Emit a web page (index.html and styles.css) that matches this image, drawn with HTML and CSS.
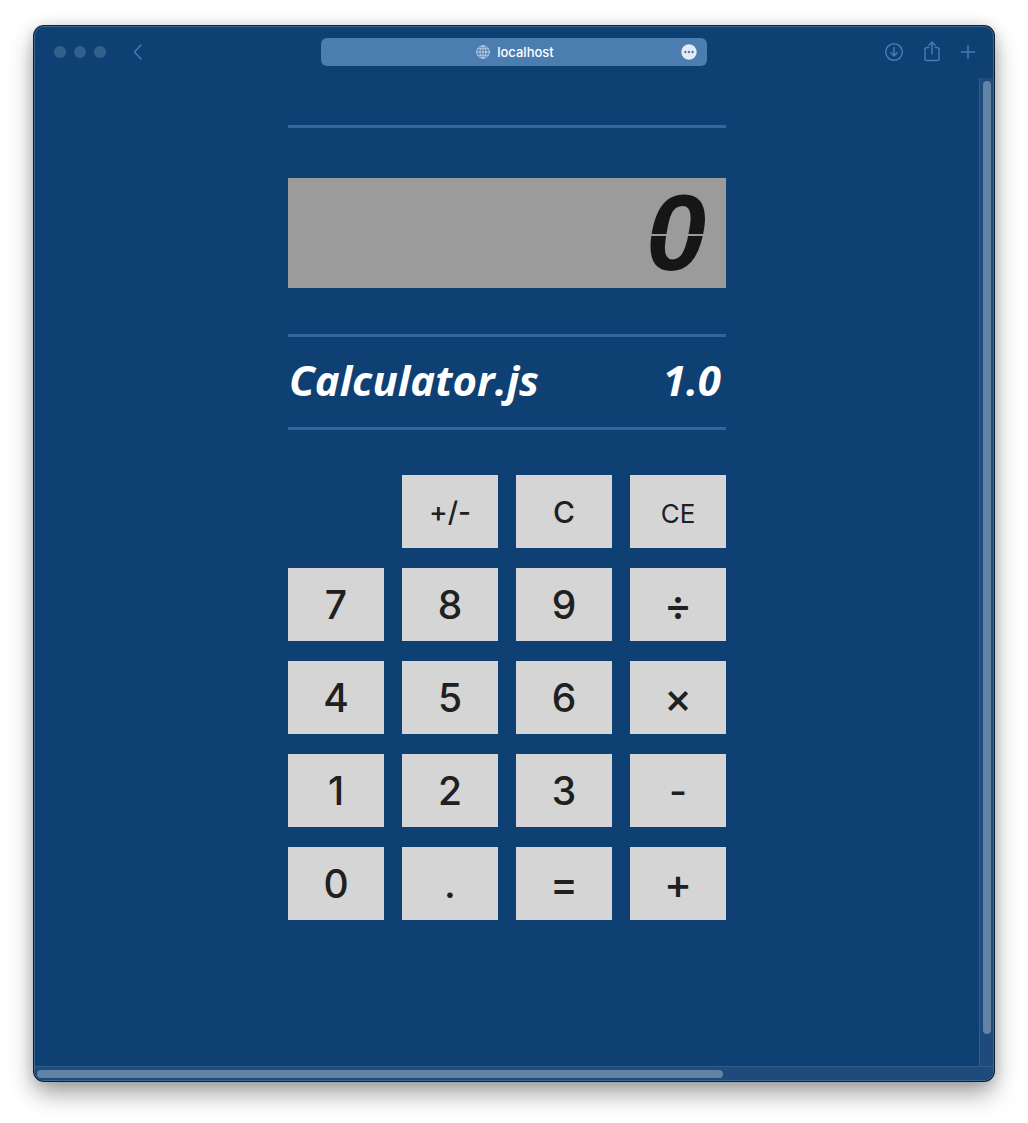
FILE: index.html
```html
<!DOCTYPE html>
<html lang="en">
<head>
<meta charset="utf-8">
<meta name="viewport" content="width=device-width, initial-scale=1">
<title>Calculator.js</title>
<link rel="stylesheet" href="styles.css">
</head>
<body>
<div class="window">
  <header class="toolbar">
    <div class="toolbar-side lights">
      <span class="light"></span><span class="light"></span><span class="light"></span>
      <button class="icon-button back" type="button" aria-label="Back">
        <svg width="10" height="18" viewBox="0 0 10 18"><path d="M8 2 1.5 9 8 16"/></svg>
      </button>
    </div>
    <div class="address">
      <svg class="globe" width="14" height="14" viewBox="0 0 14 14"><circle cx="7" cy="7" r="6.3"/><ellipse cx="7" cy="7" rx="3" ry="6.3"/><path d="M7 .7v12.6M.7 7h12.6M1.7 3.8h10.6M1.7 10.2h10.6"/></svg>
      <span class="host">localhost</span>
      <button class="icon-button more" type="button" aria-label="Page menu">
        <svg width="16" height="16" viewBox="0 0 16 16"><circle class="disc" cx="8" cy="8" r="7.7"/><circle class="dot" cx="4.4" cy="8" r="1.2"/><circle class="dot" cx="8" cy="8" r="1.2"/><circle class="dot" cx="11.6" cy="8" r="1.2"/></svg>
      </button>
    </div>
    <div class="toolbar-side actions">
      <button class="icon-button" type="button" aria-label="Downloads">
        <svg width="20" height="24" viewBox="0 0 20 24"><circle cx="10" cy="12" r="8.3"/><path d="M10 7.5v8.2M6.8 12.7l3.2 3.2 3.2-3.2"/></svg>
      </button>
      <button class="icon-button" type="button" aria-label="Share">
        <svg width="18" height="24" viewBox="0 0 18 24"><path d="M5.7 7.5H4Q2 7.500 2 9.500V18.500Q2 20.500 4 20.500H14Q16 20.500 16 18.500V9.500Q16 7.500 14 7.500H12.300M9 14V2.300M5.900 5.200 9 2.100 12.100 5.200"/></svg>
      </button>
      <button class="icon-button" type="button" aria-label="New tab">
        <svg width="16" height="24" viewBox="0 0 16 24"><path d="M8 5.500v13M1.500 12h13"/></svg>
      </button>
    </div>
  </header>
  <main class="page">
    <div class="calculator">
      <hr class="rule">
      <output class="display" aria-label="Result"><span class="digit">0</span></output>
      <hr class="rule">
      <h1 class="brand"><span>Calculator.js</span><span>1.0</span></h1>
      <hr class="rule">
      <div class="keys">
        <button class="key word first" type="button">+/-</button>
        <button class="key word" type="button">C</button>
        <button class="key word small" type="button">CE</button>
        <button class="key" type="button">7</button>
        <button class="key" type="button">8</button>
        <button class="key" type="button">9</button>
        <button class="key operator" type="button">÷</button>
        <button class="key" type="button">4</button>
        <button class="key" type="button">5</button>
        <button class="key" type="button">6</button>
        <button class="key operator" type="button">×</button>
        <button class="key" type="button">1</button>
        <button class="key" type="button">2</button>
        <button class="key" type="button">3</button>
        <button class="key" type="button">-</button>
        <button class="key" type="button">0</button>
        <button class="key" type="button">.</button>
        <button class="key operator" type="button">=</button>
        <button class="key operator" type="button">+</button>
      </div>
    </div>
  </main>
  <div class="track vertical"><div class="thumb"></div></div>
  <div class="track horizontal"><div class="thumb"></div></div>
</div>
</body>
</html>
```
FILE: styles.css
```css
* { box-sizing: border-box; }

body {
  margin: 0;
  min-height: 100vh;
  padding: 26px 34px 42px;
  background: #fff;
  font-family: Inter, "Liberation Sans", sans-serif;
}

.window {
  display: grid;
  grid-template: 51px 1fr 14px / 1fr 14px;
  min-height: calc(100vh - 68px);
  border: 1px solid #3c6894;
  border-radius: 10px;
  overflow: hidden;
  background: #0f4073;
  box-shadow: 0 0 0 1px #10202f, 0 12px 24px rgba(0, 0, 0, .38), 0 0 14px rgba(0, 0, 0, .14);
}

.toolbar {
  grid-column: 1 / -1;
  display: grid;
  grid-template-columns: 1fr minmax(120px, 386px) 1fr;
  align-items: center;
  padding: 0 17px 2px;
}

.toolbar-side { display: flex; align-items: center; gap: 8px; }
.lights { padding-left: 2px; }
.actions { justify-content: flex-end; gap: 19px; }

.light { width: 12px; height: 12px; border-radius: 50%; background: #335f8d; }

.icon-button {
  display: flex;
  padding: 0;
  border: 0;
  background: none;
}
.icon-button svg,
.globe {
  fill: none;
  stroke: #477bb1;
  stroke-width: 1.5;
  stroke-linecap: round;
  stroke-linejoin: round;
}
.back { margin-left: 19px; }

.address {
  display: grid;
  grid-template-columns: 1fr auto auto 1fr;
  align-items: center;
  gap: 7px;
  height: 28px;
  padding: 0 10px 0 12px;
  border-radius: 6px;
  background: #4b7db1;
}
.address .globe { grid-column: 2; stroke: #c9d8e8; stroke-width: .8; }
.host { color: #fff; font-size: 13px; line-height: 16px; font-weight: 500; }
.more { justify-self: end; }
.more .disc { fill: #e4ebf3; stroke: none; }
.more .dot { fill: #4b7db1; stroke: none; }

.page {
  display: flex;
  justify-content: center;
  padding: 47px 16px;
}

.calculator { width: 100%; max-width: 438px; }

.rule { height: 3px; margin: 0; border: 0; background: #35659c; }

.display {
  display: flex;
  align-items: center;
  justify-content: flex-end;
  height: 110px;
  margin: 50px 0 46px;
  padding: 0 20px;
  background: #9b9b9b;
}
/* The fill is split at mid-height, like the gap between two LCD segments. */
.digit {
  display: block;
  color: transparent;
  background: linear-gradient(#161616 56px, #9b9b9b 56px 58px, #161616 58px);
  -webkit-background-clip: text;
  background-clip: text;
  font: italic bold 108px/110px "Liberation Sans", sans-serif;
}

.brand {
  display: flex;
  justify-content: space-between;
  margin: 0;
  padding: 0 5px 4px 1px;
  color: #fff;
  font: italic bold 42px/86px "Open Sans", "Noto Sans", sans-serif;
}

.keys {
  display: grid;
  grid-template-columns: repeat(4, 1fr);
  gap: 20px 18px;
  margin-top: 45px;
}
.key {
  height: 73px;
  padding: 0;
  border: 0;
  background: #d5d5d5;
  color: #202020;
  font-family: inherit;
  font-size: 39px;
  font-weight: 450;
  line-height: 72px;
}
.operator { font-size: 42px; }
.word { font-size: 30px; }
.first { grid-column: 2; font-size: 28px; }
.small { padding-top: 3px; font-size: 26px; font-weight: 400; }

.track { padding: 3px 3px 3px 2px; background: #1e4a7c; }
.vertical { padding-left: 3px; border-left: 1px solid #315d8a; }
.vertical .thumb { width: 8px; height: 97%; }
.horizontal {
  grid-column: 1 / -1;
  border-top: 1px solid #315d8a;
}
.horizontal .thumb { width: 72%; height: 8px; }
.thumb { border-radius: 4px; background: #6383a5; }
```
